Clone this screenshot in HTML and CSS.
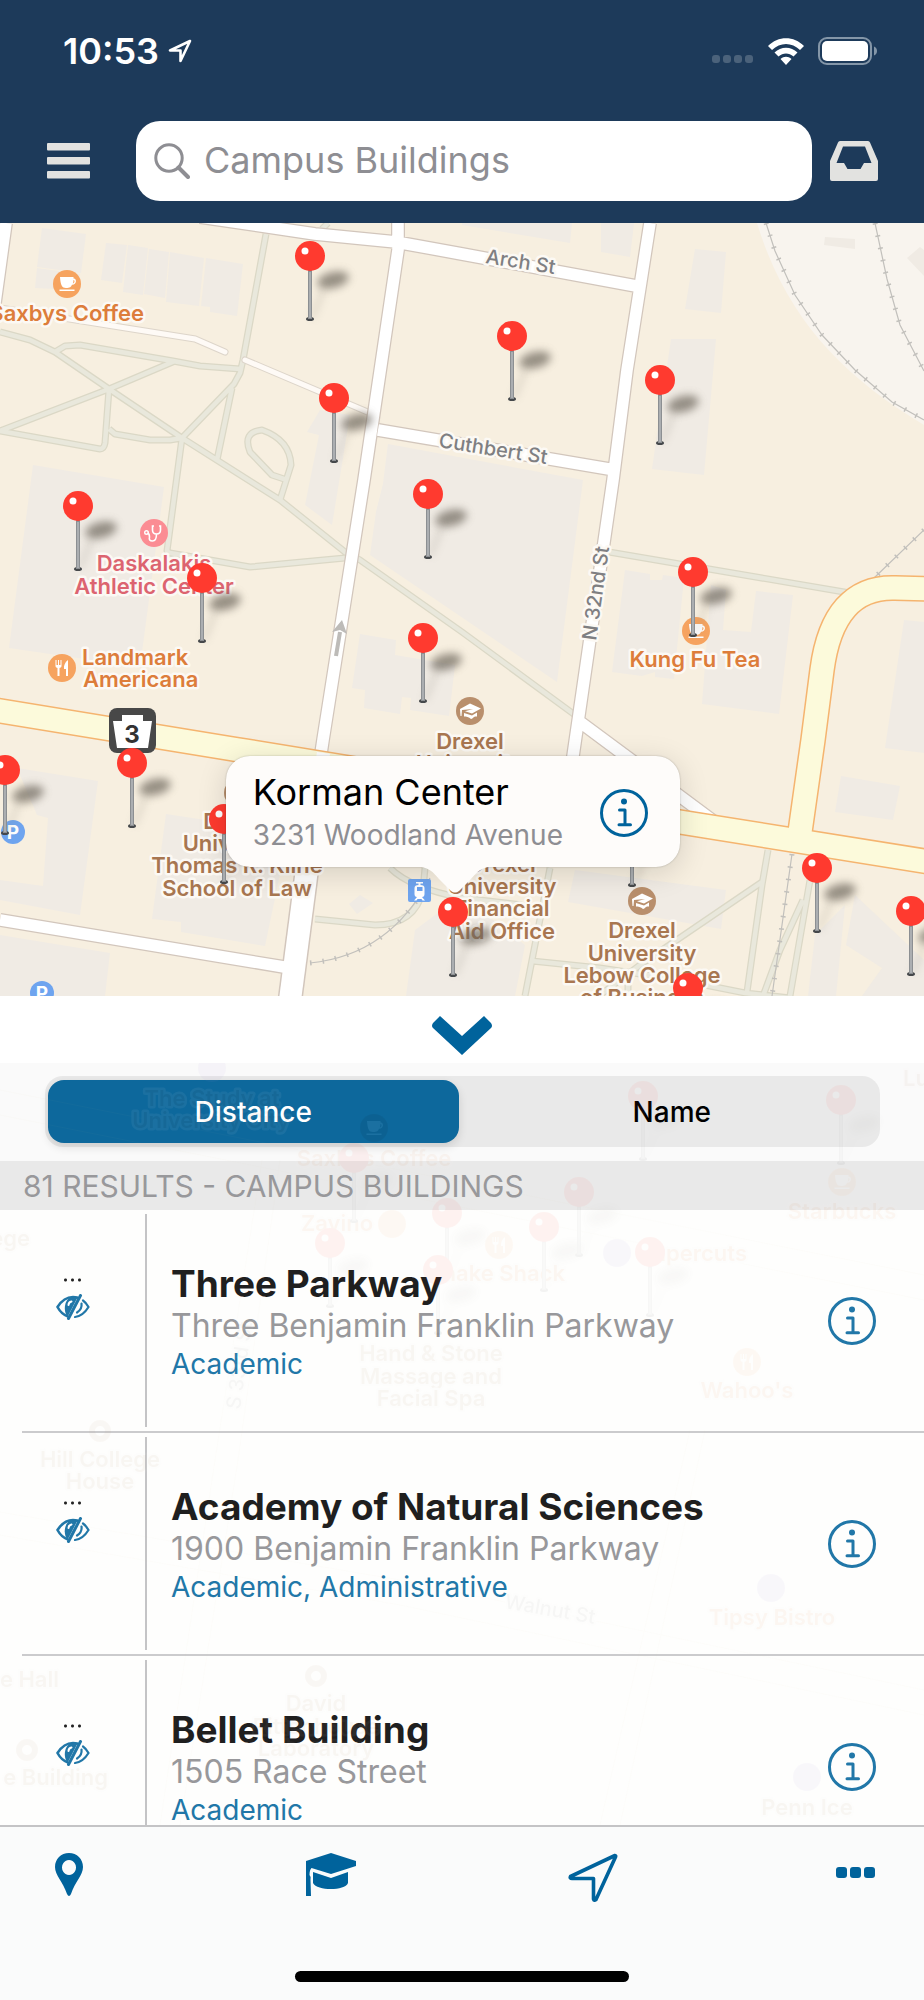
FILE: index.html
```html
<!DOCTYPE html>
<html lang="en">
<head>
<meta charset="utf-8">
<meta name="viewport" content="width=device-width, initial-scale=1">
<title>Campus Buildings</title>
<link rel="stylesheet" href="styles.css">
</head>
<body>
<svg class="defs" aria-hidden="true">
  <symbol id="info" viewBox="0 0 48 48">
    <circle cx="24" cy="24" r="22.5" fill="none" stroke="currentColor" stroke-width="3"/>
    <circle cx="24" cy="12.5" r="3"/>
    <path d="M19.5 21H25V35.5M19 35.8H30.5" fill="none" stroke="currentColor" stroke-width="3" stroke-linecap="round" stroke-linejoin="round"/>
  </symbol>
  <symbol id="hidden-eye" viewBox="0 0 34 26">
    <path d="M1.5 13C6 6 11 3 17 3c1.6 0 3 .2 4.2.6M12 22.600C7.500 21 4 17.600 1.500 13" fill="none" stroke="currentColor" stroke-width="2.600" stroke-linecap="round"/>
    <path d="M21.500 3.500 11.500 23C7 17 8 6 15 3z"/>
    <path d="M24.500 1.500 12.500 24.500" stroke="currentColor" stroke-width="3" stroke-linecap="round"/>
    <path d="M15.500 7.500c-1.800.4-3 1.800-3 3.600" fill="none" stroke="#fff" stroke-width="2" stroke-linecap="round"/>
    <path d="M27 6.500c2.300 1.600 4 3.800 5.500 6.500-3.500 5.800-8 9.300-13.500 10M25.500 9.500c.6 4-1.300 7-4.500 9" fill="none" stroke="currentColor" stroke-width="2.200" stroke-linecap="round"/>
  </symbol>
  <symbol id="cup" viewBox="-14 -14 28 28">
    <path d="M-7-7H6.500V-5.500C10-6 10 1 5 .8 4 3 3 4-1 4-5 4-6.500 1-7-7zM6.400-4C6.400-2 6.200-1.200 5.700-.6 8-1 8-4 6.400-4z" fill-rule="evenodd"/>
    <path d="M-7.500 5.500H7.500V7H-7.500z"/>
  </symbol>
  <symbol id="grad" viewBox="-14 -14 28 28">
    <path d="M-10-2 0-7.500 11-2.500 2 2.500-5 .2 3-2-8-1-8.500 5-9.500 5z"/>
    <path d="M-6 2 2 4.500 7 1.500V5.500L5 5.500C3 6.500 2 8 1 8-1 6-4 5.500-6 5.500z"/>
  </symbol>
  <symbol id="fork" viewBox="-14 -14 28 28">
    <path d="M-6.500-8V-2C-6.500 0-5-.5-4.500 0V8H-2.500V0C-2 -.5-.5 0-.5-2V-8H-1.500V-3H-3V-8H-4V-3H-5.500V-8zM6-8C3-6 1.500-2 2 1H4V8H6z"/>
  </symbol>
  <symbol id="pin" viewBox="-20 -20 60 92" overflow="visible">
    <ellipse cx="23" cy="24" rx="16" ry="8" fill="#6d665c" opacity=".7" transform="rotate(-14 23 24)" filter="url(#soft)"/>
    <path d="M2 62 14 32" stroke="#8d877c" stroke-width="4" opacity=".3" filter="url(#soft)"/>
    <ellipse cx="0" cy="63" rx="4" ry="2" fill="#45484b"/>
    <path d="M0 12V63" stroke="#8c8f92" stroke-width="4"/>
    <path d="M0 16V62" stroke="#abaeb1" stroke-width="2"/>
    <circle r="15" fill="#ff3a2f"/>
    <circle cx="-5" cy="-5" r="3.500" fill="#fff"/>
  </symbol>
  <filter id="soft" filterUnits="userSpaceOnUse" x="-20" y="-10" width="90" height="90"><feGaussianBlur stdDeviation="4.500"/></filter>
</svg>

<div class="app">
  <header class="header">
    <div class="status">
      <div class="status-side">
        <time class="clock">10:53</time>
        <svg class="status-arrow" viewBox="0 0 24 24" aria-hidden="true"><path d="M22 2 2 11.500H12.500V22z" fill="none" stroke="currentColor" stroke-width="2.600" stroke-linejoin="round"/></svg>
      </div>
      <div class="status-side status-right">
        <svg class="signal" viewBox="0 0 42 8" aria-hidden="true"><rect width="8" height="8" rx="3"/><rect x="11" width="8" height="8" rx="3"/><rect x="22" width="8" height="8" rx="3"/><rect x="33" width="8" height="8" rx="3"/></svg>
        <svg class="wifi" viewBox="0 0 36 27" aria-hidden="true"><path d="M0 8C10-2.500 26-2.500 36 8L32 12C24 4 12 4 4 12zM6.500 14.500C13 8 23 8 29.500 14.500L25.500 18.500C21 14.500 15 14.500 10.500 18.500zM12.500 21C16 18 20 18 23.500 21L18 27z"/></svg>
        <svg class="battery" viewBox="0 0 60 28" aria-hidden="true"><rect x="1" y="1" width="52" height="26" rx="8" fill="none" stroke="#8496a8" stroke-width="2"/><rect x="4" y="4" width="46" height="20" rx="5"/><path d="M56 9.500C60 11 60 17 56 18.500z" fill="#8496a8"/></svg>
      </div>
    </div>
    <div class="toolbar">
      <button class="icon-button menu-button" aria-label="Menu"><svg viewBox="0 0 43 36"><rect width="43" height="7.500" rx="1"/><rect y="14" width="43" height="7.500" rx="1"/><rect y="28" width="43" height="7.500" rx="1"/></svg></button>
      <label class="search">
        <svg viewBox="0 0 36 36" aria-hidden="true"><circle cx="15" cy="15" r="13.200"/><path d="M24.500 24.500 34 34" stroke-width="4"/></svg>
        <input type="search" aria-label="Search" placeholder="Campus Buildings">
      </label>
      <button class="icon-button inbox-button" aria-label="Inbox"><svg viewBox="0 0 48 40"><path fill-rule="evenodd" d="M10 0H38Q39.500 0 40 1.500L48 20V38Q48 40 46 40H2Q0 40 0 38V20L8 1.500Q8.500 0 10 0zM13 5.500 6.500 22H14L17.500 28H30.500L34 22H41.500L35 5.500z"/></svg></button>
    </div>
  </header>

  <main class="map">
    <svg class="map-canvas" viewBox="0 223 924 773" role="img" aria-label="Campus map">
      <rect y="223" width="924" height="773" fill="#f7efe0"/>
      <path d="M757 223C785 315 840 375 924 425V223z" fill="#f8f4ee"/>
      <g fill="#f0ebe4">
        <path d="M42 228 86 234 81 273 37 267zM37 268 80 274 78 290 35 288zM106 243 127 245 122 283 101 280zM128 245 148 248 143 295 123 292zM149 249 169 252 165 298 144 294zM170 252 204 258 199 306 166 302zM206 258 243 264 237 316 210 312V307L201 306z"/>
        <path d="M320 410 350 415 332 525 305 505 319 435 307 432zM33 465 164 487 140 667 9 648zM388 444 583 480 557 682 370 555 376 512 383 484zM360 634 396 640 395 655 455 665 449 716 410 710 411 698 402 697 400 714 364 708 365 690 352 688z"/>
        <path d="M462 223H572L570 243 462 225zM601 223H634L630 257 601 252zM695 249 726 252 721 313 685 309zM671 339 716 339 704 475 652 469zM825 237 855 239V249L824 245zM907 258 920 247 924 250V276z"/>
        <path d="M625 570 650 574V580H662L663 575 684 578 674 679 655 677V672L642 676 612 672zM711 585 726 590 723 630 751 632 756 591 793 595 779 714 702 704zM904 620 924 622V753L885 748z"/>
        <path d="M17 768 98 781 80 915 0 900V880L43 886 48 818 37 815zM166 814 270 830 283 860 265 946 181 932V922L152 919zM0 935 110 953 105 996H0zM415 930 462 895 525 945 515 996H406zM349 904 360 895 373 903 357 914zM575 870 726 890 721 929 568 902z"/>
        <path d="M841 776 900 786 893 820 835 812zM815 935 845 905 836 996H808zM855 895 924 960V996H862L882 968 846 945z"/>
      </g>
      <g fill="none" stroke-linejoin="round">
        <g stroke="#dbd8c6" stroke-width="7">
          <path id="park" d="M266 234 243 360 240 373 234 384 182 438M0 332 30 340 55 352 109 389 182 438 280 500 345 552 360 560 462 632 575 715M55 352 65 346 80 345 173 361 200 366 240 369M175 361 109 389 0 431 100 449Q104 449 105 443L109 389M109 429 115 434 150 440 170 440 182 438 167 551 170 553 250 567 345 558M232 388 217 460M287 480 272 475 250 452Q242 432 262 430 290 440 291 465L280 500M328 223 322 229M609 552 850 593"/>
          <path id="park2" d="M550 868 525 996M462 898 522 905M532 961 600 968 680 980 745 993 790 998M768 850 762 885 747 992M762 882 640 965 600 995M628 970V996M810 880 790 996M803 900 780 950 763 996M390 868Q410 888 462 898M425 868 423 890Q415 925 375 925L315 919"/>
        </g>
        <g stroke="#e9e8dc" stroke-width="4.500"><use href="#park"/><use href="#park2"/></g>
      </g>
      <g fill="none" stroke="#c2c0bc">
        <path id="rail" stroke-width="1.200" d="M766 223 775 251 795 295 822 335 855 370 892 402 924 420M875 223 887 279 900 325 924 371M924 530 874 578M792 854 772 996M310 963Q390 955 430 878"/>
        <path stroke-width="5" stroke-dasharray="1.500 11" d="M766 223 775 251 795 295 822 335 855 370 892 402 924 420M875 223 887 279 900 325 924 371M924 530 874 578M792 854 772 996M310 963Q390 955 430 878"/>
      </g>
      <g fill="none" stroke="#ddd5ca" stroke-width="7" stroke-linecap="round"><path d="M0 308 195 339 225 352M245 360 370 413"/><path d="M0 308 195 339 225 352M245 360 370 413" stroke="#fefaf6" stroke-width="5"/></g>
      <g fill="none" stroke="#d2c6bc" stroke-linejoin="round">
        <g stroke-width="14">
          <path id="streets" d="M200 217 315 234 396 242 462 254 636 286M398 223V250L364 480 323 740 314 800M650 223 627 370 613 480 571 770M378 430 609 469M580 722 720 826M0 920 290 968M6 223-6 310"/>
        </g>
        <path d="M316 800 290 1000" stroke-width="25"/>
      </g>
      <g fill="none" stroke="#fff"><use href="#streets" stroke-width="11.500"/><path d="M316 800 290 1000" stroke-width="22"/></g>
      <g fill="none" stroke-linejoin="round">
        <path d="M-5 710 233 749 680 822 930 862M800 832 813 740 822 670Q833 586 895 588L930 589" stroke="#f5b46f" stroke-width="26"/>
        <path d="M-5 710 233 749 680 822 930 862M800 832 813 740 822 670Q833 586 895 588L930 589" stroke="#fcfadb" stroke-width="23"/>
      </g>
      <path d="M317 752 311 790 322 792 330 754z" fill="#fff"/>
      <path d="M336 656 340 632" stroke="#bdbbb8" stroke-width="4"/><path d="M342 620 347 634 340 630 332 632z" fill="#bdbbb8"/>

      <g class="street-label">
        <text transform="translate(485 263) rotate(9)">Arch St</text>
        <text transform="translate(438 447) rotate(9)">Cuthbert St</text>
        <text transform="translate(596 641) rotate(-82)">N 32nd St</text>
      </g>

      <g fill="#fff">
        <circle cx="67" cy="284" r="14" fill="#f6a35f"/><use href="#cup" x="53" y="270" width="28" height="28"/>
        <circle cx="62" cy="668" r="14" fill="#f6a35f"/><use href="#fork" x="48" y="654" width="28" height="28"/>
        <circle cx="696" cy="631" r="14" fill="#f6a35f"/><use href="#cup" x="682" y="617" width="28" height="28"/>
        <circle cx="154" cy="533" r="14" fill="#fb8c93"/>
        <path d="M154 526h-1.500v4q0 4 4 4t4-4v-4H159M156.500 534q0 7-4 7t-3-4q0-3.500-2-4" fill="none" stroke="#fff" stroke-width="1.600"/><circle cx="146.500" cy="532.500" r="1.800" fill="none" stroke="#fff" stroke-width="1.400"/>
        <circle cx="470" cy="711" r="14" fill="#b98f6c"/><use href="#grad" x="456" y="697" width="28" height="28"/>
        <circle cx="238" cy="793" r="14" fill="#b98f6c"/>
        <circle cx="642" cy="901" r="14" fill="#b98f6c"/><use href="#grad" x="628" y="887" width="28" height="28"/>
        <circle cx="13" cy="832" r="12" fill="#6ea4ef"/><circle cx="42" cy="993" r="12" fill="#6ea4ef"/>
        <rect x="408" y="879" width="23" height="23" rx="2" fill="#6ea4ef"/>
        <path d="M416 882h7v1.500h-2.500v1.500q4 0 4 3v6q0 3-2.500 3l3 3.500h-2.500l-1-1.500h-4l-1 1.500H414l3-3.500q-2.500 0-2.500-3v-6q0-3 4-3v-1.500H416zM417 887v4h5.500v-4z" fill-rule="evenodd"/>
      </g>
      <g class="parking"><text x="13" y="839">P</text><text x="42" y="1000">P</text></g>

      <rect x="109" y="708" width="47" height="45" rx="8" fill="#484848"/>
      <path d="M122 715H143V721H152L148 748H117L113 721H122z" fill="#fff"/>
      <text class="shield" x="132" y="743">3</text>

      <g class="place food">
        <text class="end" x="144" y="321">Saxbys Coffee</text>
        <text x="82" y="665">Landmark</text><text x="83" y="687">Americana</text>
        <text class="mid" x="695" y="667">Kung Fu Tea</text>
      </g>
      <g class="place gym"><text class="mid" x="154" y="571">Daskalakis</text><text class="mid" x="154" y="594">Athletic Center</text></g>
      <g class="place school">
        <text class="mid" x="470" y="749">Drexel</text><text class="mid" x="470" y="771">University</text>
        <text class="mid" x="237" y="829">Drexel</text><text class="mid" x="237" y="851">University</text><text class="mid" x="237" y="873">Thomas R. Kline</text><text class="mid" x="237" y="896">School of Law</text>
        <text class="mid" x="502" y="872">Drexel</text><text class="mid" x="502" y="894">University</text><text class="mid" x="502" y="916">Financial</text><text class="mid" x="502" y="939">Aid Office</text>
        <text class="mid" x="642" y="938">Drexel</text><text class="mid" x="642" y="961">University</text><text class="mid" x="642" y="983">Lebow College</text><text class="mid" x="642" y="1005">of Business</text>
      </g>

      <g>
        <use href="#pin" x="290" y="236" width="60" height="92"/>
        <use href="#pin" x="314" y="378" width="60" height="92"/>
        <use href="#pin" x="492" y="316" width="60" height="92"/>
        <use href="#pin" x="640" y="360" width="60" height="92"/>
        <use href="#pin" x="58" y="486" width="60" height="92"/>
        <use href="#pin" x="182" y="558" width="60" height="92"/>
        <use href="#pin" x="408" y="474" width="60" height="92"/>
        <use href="#pin" x="403" y="618" width="60" height="92"/>
        <use href="#pin" x="673" y="552" width="60" height="92"/>
        <use href="#pin" x="-15" y="750" width="60" height="92"/>
        <use href="#pin" x="112" y="743" width="60" height="92"/>
        <use href="#pin" x="204" y="799" width="60" height="92"/>
        <use href="#pin" x="612" y="802" width="60" height="92"/>
        <use href="#pin" x="433" y="892" width="60" height="92"/>
        <use href="#pin" x="797" y="848" width="60" height="92"/>
        <use href="#pin" x="891" y="891" width="60" height="92"/>
        <use href="#pin" x="668" y="968" width="60" height="92"/>
      </g>
    </svg>
    <section class="callout" aria-label="Selected building">
      <div>
        <h2 class="callout-title">Korman Center</h2>
        <p class="callout-address">3231 Woodland Avenue</p>
      </div>
      <button class="info-button" aria-label="About Korman Center"><svg><use href="#info"/></svg></button>
      <svg class="callout-tail" viewBox="0 0 80 28" aria-hidden="true"><path d="M0 0C14 1 18 6 24 13L36 25Q40 28 44 25L56 13C62 6 66 1 80 0z"/></svg>
    </section>
  </main>

  <button class="collapse" aria-label="Collapse list"><svg viewBox="0 0 60 39"><path d="M8 0 30 20 52 0 59 7Q61 10 59 12L30 39 1 12Q-1 10 1 7z"/></svg></button>

  <section class="panel" aria-label="Results">
    <fieldset class="sort">
      <legend class="visually-hidden">Sort by</legend>
      <div class="segmented">
        <label class="segment"><input type="radio" name="sort" checked><span>Distance</span></label>
        <label class="segment"><input type="radio" name="sort"><span>Name</span></label>
      </div>
    </fieldset>
    <h1 class="results">81 RESULTS - CAMPUS BUILDINGS</h1>
    <ul class="list">
      <li class="row">
        <div class="distance"><span class="dots"></span><svg><use href="#hidden-eye"/></svg></div>
        <div class="building"><h2>Three Parkway</h2><p class="address">Three Benjamin Franklin Parkway</p><p class="kind">Academic</p></div>
        <button class="info-button" aria-label="About Three Parkway"><svg><use href="#info"/></svg></button>
      </li>
      <li class="row">
        <div class="distance"><span class="dots"></span><svg><use href="#hidden-eye"/></svg></div>
        <div class="building"><h2>Academy of Natural Sciences</h2><p class="address">1900 Benjamin Franklin Parkway</p><p class="kind">Academic, Administrative</p></div>
        <button class="info-button" aria-label="About Academy of Natural Sciences"><svg><use href="#info"/></svg></button>
      </li>
      <li class="row">
        <div class="distance"><span class="dots"></span><svg><use href="#hidden-eye"/></svg></div>
        <div class="building"><h2>Bellet Building</h2><p class="address">1505 Race Street</p><p class="kind">Academic</p></div>
        <button class="info-button" aria-label="About Bellet Building"><svg><use href="#info"/></svg></button>
      </li>
    </ul>
    <svg class="backdrop" viewBox="0 1063 924 762" preserveAspectRatio="xMidYMin slice" aria-hidden="true">
      <g fill="none" stroke="#d8c89c" opacity=".5"><path d="M0 1090 300 1150 924 1275M0 1115 300 1175 924 1300M0 1512 400 1580 924 1690M0 1535 400 1605 924 1715"/><path d="M262 1160 215 1460 160 1825M280 1160 238 1460 180 1825M690 1430 600 1825M705 1430 620 1825"/></g>
      <g class="place school">
        <text class="mid" x="212" y="1106">The Study at</text><text class="mid" x="211" y="1128">University City</text>
        <text class="end" x="30" y="1246">ege</text><text class="mid" x="100" y="1467">Hill College</text><text class="mid" x="100" y="1489">House</text>
        <text class="end" x="59" y="1687">e Hall</text><text class="end" x="108" y="1785">e Building</text>
        <text class="mid" x="316" y="1711">David</text><text class="mid" x="316" y="1734">Rittenhouse</text><text class="mid" x="316" y="1756">Laboratory</text>
        <text class="mid" x="431" y="1361">Hand &amp; Stone</text><text class="mid" x="431" y="1384">Massage and</text><text class="mid" x="431" y="1406">Facial Spa</text>
        <text class="mid" x="807" y="1815">Penn Ice</text>
        <text x="903" y="1086">Lu</text>
      </g>
      <g class="place food">
        <text class="mid" x="374" y="1166">Saxbys Coffee</text><text class="mid" x="842" y="1219">Starbucks</text>
        <text x="301" y="1231">Zavino</text><text class="end" x="565" y="1281">Shake Shack</text><text class="end" x="747" y="1261">Supercuts</text>
        <text class="mid" x="747" y="1398">Wahoo's</text><text class="mid" x="772" y="1625">Tipsy Bistro</text>
      </g>
      <g class="street-label"><text transform="translate(504 1608) rotate(10)">Walnut St</text><text transform="translate(240 1410) rotate(-82)">S 33rd St</text></g>
      <g fill="#f6a35f"><circle cx="842" cy="1182" r="14"/><circle cx="374" cy="1128" r="14" fill="#000"/><circle cx="392" cy="1224" r="14"/><circle cx="499" cy="1245" r="14"/><circle cx="747" cy="1362" r="14"/></g>
      <g fill="#a58fd8"><circle cx="212" cy="1068" r="14"/><circle cx="617" cy="1253" r="14"/><circle cx="771" cy="1588" r="14"/><circle cx="807" cy="1777" r="14"/></g>
      <g fill="#fff"><use href="#cup" x="828" y="1168" width="28" height="28"/><use href="#cup" x="360" y="1114" width="28" height="28"/><use href="#fork" x="485" y="1231" width="28" height="28"/><use href="#fork" x="733" y="1348" width="28" height="28"/></g>
      <g fill="none" stroke="#b98f6c" stroke-width="6"><circle cx="100" cy="1431" r="8"/><circle cx="316" cy="1676" r="8"/><circle cx="27" cy="1750" r="8"/></g>
      <g>
        <use href="#pin" x="623" y="1076" width="60" height="92"/><use href="#pin" x="821" y="1080" width="60" height="92"/>
        <use href="#pin" x="334" y="1138" width="60" height="92"/><use href="#pin" x="559" y="1172" width="60" height="92"/>
        <use href="#pin" x="427" y="1193" width="60" height="92"/><use href="#pin" x="524" y="1207" width="60" height="92"/>
        <use href="#pin" x="310" y="1223" width="60" height="92"/><use href="#pin" x="630" y="1232" width="60" height="92"/>
        <use href="#pin" x="418" y="1250" width="60" height="92"/>
      </g>
    </svg>
  </section>

  <nav class="tabs" aria-label="Sections">
    <div class="tab-row">
      <button class="tab" aria-label="Places"><svg width="28" height="43" viewBox="0 0 28 43"><path fill-rule="evenodd" d="M14 0C22 0 28 6 28 14 28 22 20 29 16 41Q14 45 12 41C8 29 0 22 0 14 0 6 6 0 14 0zM14 7a7 7.500 0 1 0 .01 0z"/></svg></button>
      <button class="tab" aria-label="Academics"><svg width="50" height="43" viewBox="0 0 50 43"><path d="M25 0 50 8V13L25 21 5.500 15Q3.500 17 3.500 22 5.500 24 4.500 27L5 43H0V8zM7 19 25 25 42 19V30C39 38 11 38 7 30z"/></svg></button>
      <button class="tab" aria-label="Navigate"><svg width="50" height="50" viewBox="0 0 50 50"><path d="M47 2.500 2.500 23.500Q1.500 25.500 4 25.500H25.500V46Q26 48 28 46.500L47.500 4Q48 2.500 47 2.500z" fill="none" stroke="currentColor" stroke-width="3.600" stroke-linejoin="round"/></svg></button>
      <button class="tab" aria-label="More"><svg width="39" height="12" viewBox="0 0 39 12"><rect width="11" height="11" rx="3"/><rect x="14" width="11" height="11" rx="3"/><rect x="28" width="11" height="11" rx="3"/></svg></button>
    </div>
    <div class="home-bar"></div>
  </nav>
</div>
</body>
</html>
```
FILE: styles.css
```css
* { box-sizing: border-box; }

:root {
  --navy: #1d3a5a;
  --blue: #00639c;
  --list-blue: #2177a8;
  --grey: #8e8e93;
  --rule: #c4c4c6;
}

body {
  margin: 0;
  font-family: Inter, "Liberation Sans", sans-serif;
  background: #fff;
}

h1, h2, p, ul, fieldset { margin: 0; padding: 0; border: 0; }
ul { list-style: none; }
svg { display: block; fill: currentColor; }

button {
  padding: 0;
  border: 0;
  background: none;
  color: inherit;
  font: inherit;
  cursor: pointer;
}

.defs { position: absolute; width: 0; height: 0; }

.visually-hidden {
  position: absolute;
  width: 1px;
  height: 1px;
  overflow: hidden;
  clip-path: inset(50%);
}

.app {
  display: flex;
  flex-direction: column;
  height: 100vh;
  min-height: 1400px;
}

/* Header */
.header {
  flex: none;
  padding: 28px 46px 22px 47px;
  background: var(--navy);
  color: #fff;
}

.status {
  display: flex;
  justify-content: space-between;
  align-items: center;
  height: 46px;
  padding-left: 16px;
}

.status-side { display: flex; align-items: center; gap: 9px; }
.status-right { gap: 14px; }
.clock { font-size: 36px; font-weight: 600; }
.status-arrow { width: 24px; height: 24px; }
.signal { width: 42px; height: 8px; margin-top: 16px; color: #4b627b; }
.wifi { width: 36px; height: 27px; }
.battery { width: 60px; height: 28px; }

.toolbar {
  display: flex;
  align-items: center;
  margin-top: 47px;
  color: #e2e2e0;
}

.menu-button svg { width: 43px; height: 36px; }
.inbox-button svg { width: 48px; height: 40px; }

.search {
  display: flex;
  flex: 1;
  align-items: center;
  gap: 14px;
  height: 80px;
  margin: 0 18px 0 46px;
  padding: 0 18px;
  border-radius: 24px;
  background: #fff;
  color: var(--grey);
}

.search svg {
  flex: none;
  width: 36px;
  height: 36px;
  fill: none;
  stroke: currentColor;
  stroke-width: 3;
  stroke-linecap: round;
}

.search input {
  flex: 1;
  min-width: 0;
  padding: 0 0 2px;
  border: 0;
  outline: 0;
  background: none;
  color: #000;
  font: 400 36px Inter, "Liberation Sans", sans-serif;
}

.search input::placeholder { color: var(--grey); opacity: 1; }

/* Map */
.map { position: relative; flex: none; overflow: hidden; }
.map-canvas { width: 100%; height: auto; }

.place, .street-label {
  font-weight: 600;
  paint-order: stroke;
  stroke: #fcf9f4;
  stroke-width: 5px;
  stroke-linejoin: round;
}

.place { font-size: 22px; }
.street-label { fill: #7f7f82; font-size: 20px; font-weight: 500; }
.food { fill: #dd7d3b; }
.gym { fill: #dc6470; }
.school { fill: #a87650; }
.mid, .parking, .shield { text-anchor: middle; }
.end { text-anchor: end; }
.parking { fill: #fff; font-size: 19px; font-weight: 700; }
.shield { fill: #333; font-size: 24px; font-weight: 700; }

.callout {
  position: absolute;
  top: 69%;
  left: 49%;
  display: flex;
  align-items: center;
  justify-content: space-between;
  width: 454px;
  height: 111px;
  padding: 2px 32px 0 27px;
  transform: translateX(-50%);
  border-radius: 24px;
  background: #fefcfa;
  box-shadow: 0 0 2px rgba(0, 0, 0, .25), 0 6px 30px rgba(0, 0, 0, .14);
}

.callout-title { color: #000; font-size: 36px; font-weight: 400; line-height: 44px; }
.callout-address { color: var(--grey); font-size: 28px; line-height: 42px; }

.callout-tail {
  position: absolute;
  top: 110px;
  left: 189px;
  width: 80px;
  height: 28px;
  color: #fefcfa;
}

.info-button { flex: none; color: var(--blue); }
.info-button svg { width: 48px; height: 48px; }

.collapse {
  display: grid;
  flex: none;
  place-items: center;
  height: 67px;
  padding-top: 12px;
  background: #fff;
  color: var(--blue);
}

.collapse svg { width: 60px; height: 39px; }

/* Results */
.panel {
  position: relative;
  display: flex;
  flex: 1;
  flex-direction: column;
  min-height: 0;
  overflow: hidden;
  background: #fefefd;
}

.backdrop {
  position: absolute;
  inset: 0;
  width: 100%;
  height: 100%;
  opacity: .055;
  pointer-events: none;
}

.sort {
  flex: none;
  padding: 13px 44px 14px 45px;
  background: #fafafa;
}

.segmented {
  display: flex;
  gap: 8px;
  height: 71px;
  padding: 4px 3px;
  border-radius: 18px;
  background: #e9e9e9;
}

.segment {
  position: relative;
  display: flex;
  flex: 1;
  cursor: pointer;
}

.segment input {
  position: absolute;
  inset: 0;
  margin: 0;
  opacity: 0;
}

.segment span {
  display: grid;
  flex: 1;
  place-items: center;
  border-radius: 16px;
  color: #000;
  font-size: 28px;
  font-weight: 500;
}

.segment input:checked + span {
  background: #0d689c;
  color: #fff;
  box-shadow: 0 4px 10px rgba(0, 0, 0, .12);
}

.results {
  flex: none;
  padding: 1px 0 0 23px;
  background: #e9e9e9;
  color: #98989b;
  font-size: 30px;
  font-weight: 400;
  line-height: 48px;
}

.list {
  flex: 1;
  min-height: 0;
  overflow-y: auto;
  scrollbar-width: none;
}

.row {
  display: flex;
  align-items: center;
  height: 223px;
  margin-left: 22px;
  padding: 4px 48px 4px 0;
  border-bottom: 2px solid #cbcbcd;
}

.distance {
  display: flex;
  flex: none;
  flex-direction: column;
  align-items: center;
  align-self: stretch;
  gap: 12px;
  width: 125px;
  padding: 64px 22px 0 0;
  border-right: 2px solid var(--rule);
  color: var(--list-blue);
}

.dots {
  width: 21px;
  height: 4px;
  background: radial-gradient(circle, #222 1px, #2220 2px) 0 0 / 7px 4px;
}

.distance svg { width: 34px; height: 26px; }

.building { flex: 1; min-width: 0; padding: 3px 0 0 24px; }
.building h2 { color: #1f1f1f; font-size: 37px; font-weight: 700; line-height: 44px; }
.address { color: #98989b; font-size: 32px; line-height: 40px; }
.kind { color: var(--list-blue); font-size: 28px; line-height: 36px; }
.row .info-button { color: var(--list-blue); }

/* Tab bar */
.tabs {
  display: flex;
  flex: none;
  flex-direction: column;
  align-items: center;
  justify-content: space-between;
  height: 175px;
  padding: 26px 44px 18px;
  border-top: 2px solid #c4c4c6;
  background: #fafbfb;
  color: var(--blue);
}

.tab-row {
  display: flex;
  justify-content: space-between;
  align-items: flex-start;
  width: 100%;
}

.tab { display: grid; justify-items: center; width: 50px; }
.tab:last-child { padding-top: 14px; }

.home-bar { width: 40%; height: 11px; border-radius: 6px; background: #000; }
```
